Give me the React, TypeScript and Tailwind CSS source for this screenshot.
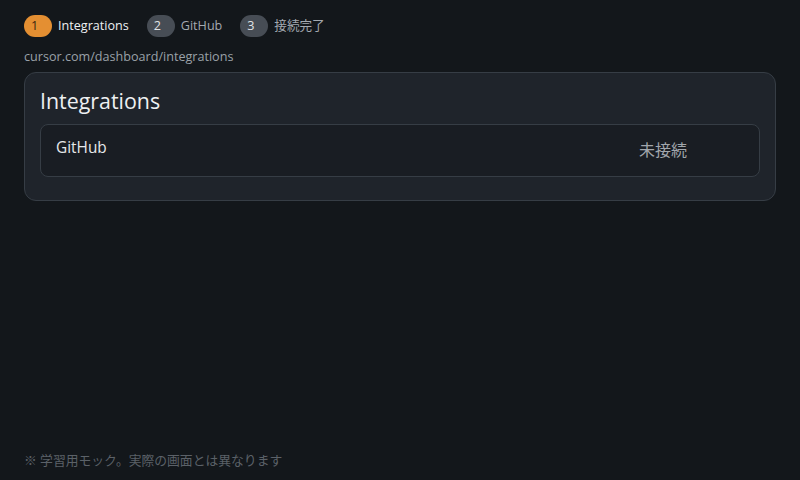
export default function App() {
  const steps = [
    { n: "1", label: "Integrations", active: true },
    { n: "2", label: "GitHub", active: false },
    { n: "3", label: "接続完了", active: false },
  ];
  return (
    <div
      className="w-[800px] h-[480px] bg-[#13171b] flex flex-col px-6 pt-[15px] pb-[10px] text-[#e6e8ea]"
      style={{ fontFamily: '"Open Sans", "Noto Sans CJK JP", sans-serif' }}
    >
      <div className="flex items-center gap-[18px] h-[22px]">
        {steps.map((s) => (
          <div key={s.n} className="flex items-center gap-[6px]">
            <span
              className={`h-[22px] w-[28px] rounded-full flex items-center pl-[7px] text-[12.6px] ${
                s.active ? "bg-[#e48f32] text-[#3a2410]" : "bg-[#474d55] text-[#e0e3e6]"
              }`}
            >
              {s.n}
            </span>
            <span className={`text-[12.6px] ${s.active ? "text-[#eef0f2]" : "text-[#a3a9b0]"}`}>{s.label}</span>
          </div>
        ))}
      </div>
      <div className="mt-[11px] text-[12.6px] text-[#9aa1a8] leading-[18px]">cursor.com/dashboard/integrations</div>
      <div className="mt-[6px] rounded-[12px] border border-[#363d45] bg-[#1f242b] px-[15px] pt-[14px] pb-[23px]">
        <div className="text-[21.4px] leading-[28px] text-[#eef0f2]">Integrations</div>
        <div className="mt-[9px] h-[53px] rounded-[8px] border border-[#363d45] bg-[#191d23] flex items-center justify-between pl-[15px] pr-[72px]">
          <span className="text-[15.4px] text-[#e6e8ea] -mt-[5px]">GitHub</span>
          <span className="text-[16px] text-[#a1a6ac] -mt-[2px]">未接続</span>
        </div>
      </div>
      <div className="mt-auto text-[12.8px] text-[#5b6168]">※ 学習用モック。実際の画面とは異なります</div>
    </div>
  );
}
